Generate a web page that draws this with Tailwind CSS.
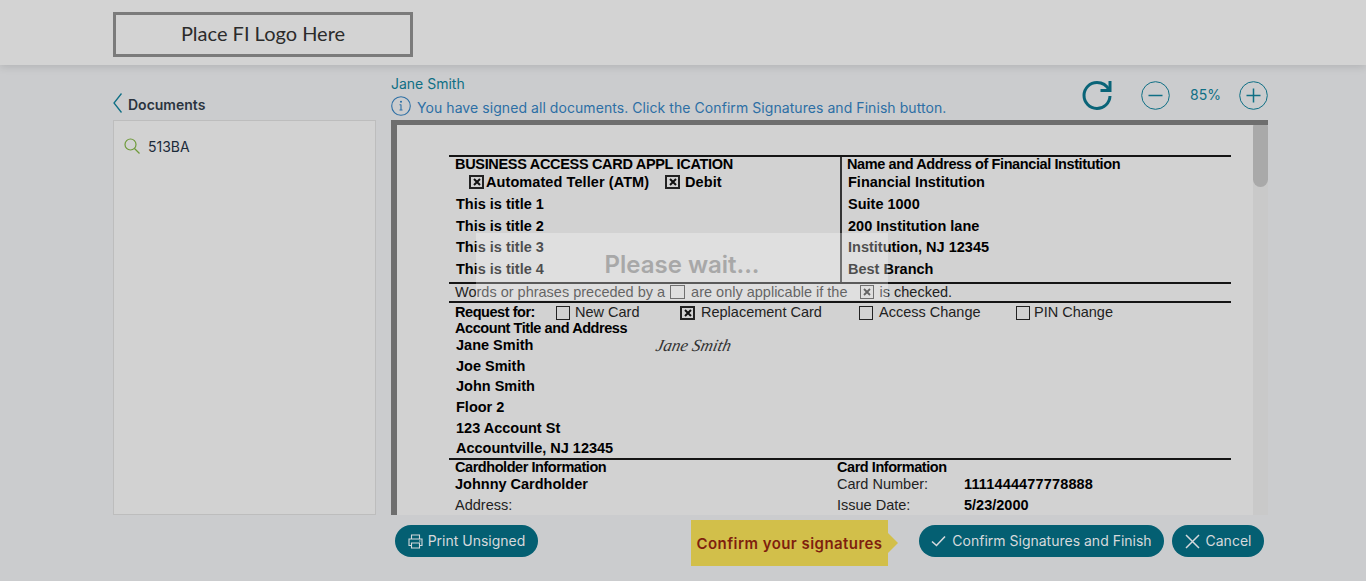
<!DOCTYPE html>
<html lang="en">
<head>
	<meta charset="UTF-8">
	<meta name="viewport" content="width=device-width, initial-scale=1.0">
	<script src="https://cdn.jsdelivr.net/npm/@tailwindcss/browser@4"></script>
	<title>Document Signing</title>
</head>
<body class="bg-[#cbccce] h-[581px] overflow-hidden font-[Inter] text-sm">

<!-- Header -->
<header class="h-[65px] bg-[#d3d3d3] shadow-[0_2px_8px_rgba(0,0,0,0.12)] pl-[113px] pt-3 relative">
	<div class="w-[300px] h-[45px] pb-[2px] border-[3px] border-[#7b7b7b] flex items-center justify-center font-[Lato] text-[20px] text-[#2b2b2b]">Place FI Logo Here</div>
</header>

<!-- Main -->
<main class="flex pl-[113px] gap-[15px] h-[450px]">
	<!-- Documents -->
	<section class="w-[263px]">
		<div class="h-[55px] flex items-end pb-[7px] gap-[6px]">
			<svg width="9" height="20" viewBox="0 0 9 20" fill="none" stroke="#0f6f85" stroke-width="1.3"><path d="M8.5 .5 L1 10 L8.5 19.5"/></svg>
			<span class="font-semibold text-[14px] text-[#2b3440] leading-[16px]">Documents</span>
		</div>
		<div class="h-[395px] bg-[#d2d2d2] border border-[#bdbdbd] pl-[10px] pt-[16px] flex items-start gap-[8px]">
			<svg class="mt-[1px]" width="16" height="16" viewBox="0 0 16 16" fill="none" stroke="#6f9a3a" stroke-width="1.2"><circle cx="6.5" cy="6.5" r="5.5"/><path d="M10.5 10.5 L15.5 15.5"/></svg>
			<span class="text-[#1c2b3a] leading-[20px]">513BA</span>
		</div>
	</section>

	<!-- Viewer -->
	<section class="w-[877px]">
		<div class="h-[55px] flex justify-between">
			<div class="pt-[10px]">
				<div class="text-[#0f6f85] leading-[18px]">Jane Smith</div>
				<div class="flex items-center gap-[6px] mt-[2px] h-[22px]">
					<svg width="20" height="20" viewBox="0 0 20 20" fill="none" stroke="#2d6fa5" stroke-width="1.1"><circle cx="10" cy="10" r="9.3"/><path d="M10 8.5 V14 M8.5 14 H11.5 M8.5 8.7 H10"/><circle cx="10" cy="5.8" r=".5"/></svg>
					<span class="text-[#2d6fa5] leading-[20px] mt-[3px] text-[14px] tracking-[.065px]">You have signed all documents. Click the Confirm Signatures and Finish button.</span>
				</div>
			</div>
			<div class="flex items-center h-[60px] pr-0">
				<svg width="32" height="32" viewBox="0 0 32 32" fill="none" stroke="#0a6478" stroke-width="3"><path d="M28 17 A13 13 0 1 1 15 3.5 C20 3.5 24.500 6 27 11"/><path d="M28 2 V11.500 H18.500"/></svg>
				<svg class="ml-[27px]" width="29" height="29" viewBox="0 0 29 29" fill="none" stroke="#0f6f85"><circle cx="14.500" cy="14.500" r="13.800"/><path stroke-width="1.500" d="M7.500 14.500 H21.500"/></svg>
				<span class="w-[69px] pl-[2px] text-center text-[#0f6f85]">85%</span>
				<svg width="29" height="29" viewBox="0 0 29 29" fill="none" stroke="#0f6f85"><circle cx="14.500" cy="14.500" r="13.800"/><path stroke-width="1.500" d="M7.500 14.500 H21.500 M14.500 7.500 V21.500"/></svg>
			</div>
		</div>

		<div class="h-[395px] flex relative overflow-hidden bg-[#d2d2d2] border-l-[6px] border-t-[5px] border-[#6e6e6e] font-['Liberation_Sans'] text-[14.5px] text-black">
			<div class="flex-1 pl-[52px] pt-[30px]">
				<div class="w-[782px] border-t-2 border-black/90">
					<!-- Top block -->
					<div class="flex h-[127px] border-b-2 border-black/90">
						<div class="w-[393px] border-r-2 border-[#333] font-bold">
							<div class="h-[16px] pl-[6px] leading-[14px] tracking-[-.32px]">BUSINESS ACCESS CARD APPL ICATION</div>
							<div class="h-[18px] pl-[20px] flex items-center tracking-[.08px]">
								<span class="w-[15px] h-[14px] border-2 border-[#222] flex items-center justify-center">
									<svg width="8" height="8" viewBox="0 0 8 8" stroke="#111" stroke-width="2"><path d="M1 1 L7 7 M7 1 L1 7"/></svg>
								</span>
								<span class="ml-[2px] w-[179px]">Automated Teller (ATM)</span>
								<span class="w-[15px] h-[14px] border-2 border-[#222] flex items-center justify-center">
									<svg width="8" height="8" viewBox="0 0 8 8" stroke="#111" stroke-width="2"><path d="M1 1 L7 7 M7 1 L1 7"/></svg>
								</span>
								<span class="ml-[5px]">Debit</span>
							</div>
							<div class="pl-[7px] pt-[3px]">
								<div class="h-[21.7px] leading-[21.7px]">This is title 1</div>
								<div class="h-[21.7px] leading-[21.7px]">This is title 2</div>
								<div class="h-[21.7px] leading-[21.7px]">This is title 3</div>
								<div class="h-[21.7px] leading-[21.7px]">This is title 4</div>
							</div>
						</div>
						<div class="font-bold">
							<div class="h-[16px] pl-[5px] leading-[14px] tracking-[-.4px]">Name and Address of Financial Institution</div>
							<div class="h-[18px] pl-[6px] leading-[18px]">Financial Institution</div>
							<div class="pl-[6px] pt-[3px]">
								<div class="h-[21.7px] leading-[21.7px]">Suite 1000</div>
								<div class="h-[21.7px] leading-[21.7px]">200 Institution lane</div>
								<div class="h-[21.7px] leading-[21.7px]">Institution, NJ 12345</div>
								<div class="h-[21.7px] leading-[21.7px]">Best Branch</div>
							</div>
						</div>
					</div>

					<!-- Note row -->
					<div class="h-[19px] border-b-2 border-black/90 pl-[6px] flex items-center text-[#222] pb-[1px]">
						<span>Words or phrases preceded by a</span>
						<span class="w-[15px] h-[14px] border border-[#333] ml-[5px]"></span>
						<span class="ml-[6px]">are only applicable if the</span>
						<span class="w-[14px] h-[14px] border border-[#333] ml-[12px] flex items-center justify-center">
							<svg width="8" height="8" viewBox="0 0 8 8" stroke="#222" stroke-width="1.800"><path d="M1 1 L7 7 M7 1 L1 7"/></svg>
						</span>
						<span class="ml-[6px]">is checked.</span>
					</div>

					<!-- Request row -->
					<div class="h-[19px] pl-[6px] flex items-center text-[#222]">
						<span class="w-[101px] font-bold text-black tracking-[-.45px]">Request for:</span>
						<span class="w-[14px] h-[14px] border border-[#222]"></span>
						<span class="ml-[5px] w-[105px]">New Card</span>
						<span class="w-[15px] h-[14px] border-2 border-[#222] flex items-center justify-center">
							<svg width="8" height="8" viewBox="0 0 8 8" stroke="#111" stroke-width="2"><path d="M1 1 L7 7 M7 1 L1 7"/></svg>
						</span>
						<span class="ml-[6px] w-[158px]">Replacement Card</span>
						<span class="w-[14px] h-[14px] border border-[#222]"></span>
						<span class="ml-[6px] w-[137px]">Access Change</span>
						<span class="w-[14px] h-[14px] border border-[#222]"></span>
						<span class="ml-[4px]">PIN Change</span>
					</div>

					<!-- Account -->
					<div class="relative border-b-2 border-black/90 h-[138px]">
						<div class="h-[13px] pl-[6px] leading-[13px] font-bold tracking-[-.43px]">Account Title and Address</div>
						<div class="pl-[7px] font-bold">
							<div class="h-[20.7px] leading-[20.7px]">Jane Smith</div>
							<div class="h-[20.7px] leading-[20.7px]">Joe Smith</div>
							<div class="h-[20.7px] leading-[20.7px]">John Smith</div>
							<div class="h-[20.7px] leading-[20.7px]">Floor 2</div>
							<div class="h-[20.7px] leading-[20.7px]">123 Account St</div>
							<div class="h-[20.7px] leading-[20.7px]">Accountville, NJ 12345</div>
						</div>
						<!-- signature -->
						<span class="absolute left-[207px] top-[12px] font-['Liberation_Serif'] italic text-[17px] leading-[24px] text-[#333] -skew-x-12">Jane Smith</span>
					</div>

					<!-- Cardholder -->
					<div class="flex">
						<div class="w-[388px] pl-[6px]">
							<div class="h-[14px] leading-[14px] font-bold tracking-[-.45px]">Cardholder Information</div>
							<div class="h-[20px] leading-[20px] font-bold">Johnny Cardholder</div>
							<div class="h-[21px] leading-[21px] text-[#222] pt-[1px]">Address:</div>
						</div>
						<div>
							<div class="h-[14px] leading-[14px] font-bold tracking-[-.45px]">Card Information</div>
							<div class="h-[20px] leading-[20px] flex text-[#222]"><span class="w-[127px]">Card Number:</span><span class="font-bold text-black tracking-[.15px]">1111444477778888</span></div>
							<div class="h-[21px] leading-[21px] flex text-[#222] pt-[1px]"><span class="w-[127px]">Issue Date:</span><span class="font-bold text-black">5/23/2000</span></div>
						</div>
					</div>
				</div>
			</div>
			<!-- Scrollbar -->
			<div class="w-[15px] -mt-[5px] bg-[#c9c9c9]">
				<div class="h-[67px] rounded-full bg-[#a9a9a9]"></div>
			</div>
			<!-- Wait overlay -->
			<div class="absolute left-[79px] top-[108px] w-[412px] h-[67px] pb-[2px] bg-white/30 flex items-center justify-center font-[Inter] font-semibold text-[24px] text-[#a8a8a8]">Please wait...</div>
		</div>
	</section>
</main>

<!-- Footer -->
<footer class="flex pl-[395px] text-[#d6d9dc]">
	<button class="mt-[10px] h-[32px] w-[143px] rounded-full bg-[#045f72] flex items-center justify-center gap-[5px]">
		<svg width="15" height="15" viewBox="0 0 15 15" fill="none" stroke="#d6d9dc" stroke-width="1.1"><path d="M3.500 5 V1 H11.500 V5 M3.500 11.500 H1 V5 H14 V11.500 H11.500"/><path d="M3.500 9 H11.500 V14 H3.500 Z"/><path d="M11 7 H12.500"/></svg>
		Print Unsigned
	</button>
	<div class="relative ml-[153px] mt-[5px] w-[197px] h-[46px] pt-[1px] bg-[#d2bf4a] flex items-center justify-center text-[#7f1f0e] font-semibold text-[15px] tracking-[.45px] whitespace-nowrap">
		Confirm your signatures
		<span class="absolute left-full top-[13px] border-y-[10px] border-l-[10px] border-y-transparent border-l-[#d2bf4a]"></span>
	</div>
	<button class="ml-[31px] mt-[10px] h-[32px] w-[245px] rounded-full bg-[#045f72] flex items-center justify-center gap-[6px]">
		<svg width="15" height="12" viewBox="0 0 15 12" fill="none" stroke="#d6d9dc" stroke-width="1.600"><path d="M1 6.500 L5.500 10.500 L14 1.500"/></svg>
		Confirm Signatures and Finish
	</button>
	<button class="ml-[8px] mt-[10px] h-[32px] w-[92px] rounded-full bg-[#045f72] flex items-center justify-center gap-[6px]">
		<svg width="15" height="15" viewBox="0 0 15 15" fill="none" stroke="#d6d9dc" stroke-width="1.500"><path d="M1 1 L14 14 M14 1 L1 14"/></svg>
		Cancel
	</button>
</footer>

</body>
</html>
